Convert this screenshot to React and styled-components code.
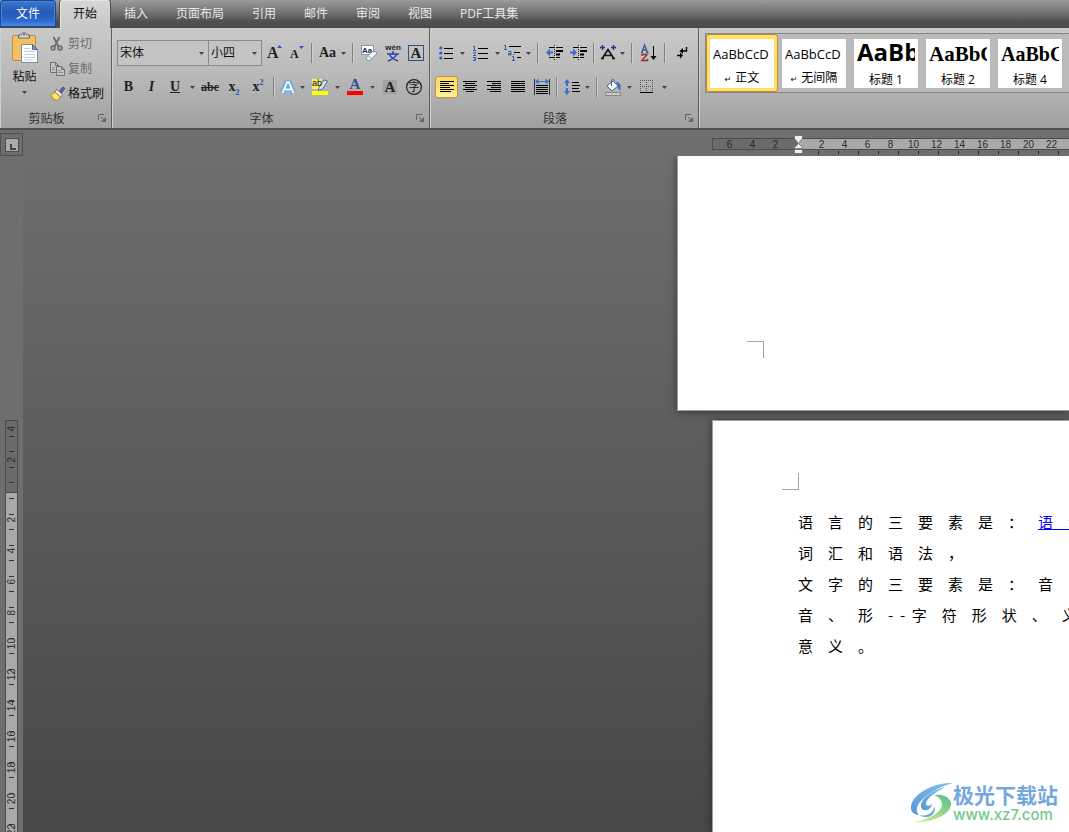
import React from 'react';
import styled, { createGlobalStyle, css } from 'styled-components';

const GlobalStyle = createGlobalStyle`
  * {
    box-sizing: border-box;
  }

  body {
    margin: 0;
    font-family: 'Open Sans', 'Noto Sans CJK SC', sans-serif;
    font-size: 12px;
    color: #111;
  }

  button, select {
    margin: 0;
    padding: 0;
    border: 0;
    background: none;
    font: inherit;
    color: inherit;
  }

  svg {
    flex-shrink: 0;
    overflow: visible;
  }
`;

const Window = styled.div`
  display: flex;
  flex-direction: column;
  height: 100vh;
  overflow: hidden;
  position: relative;
`;

const TabBar = styled.nav`
  display: flex;
  align-items: stretch;
  height: 28px;
  flex-shrink: 0;
  background: linear-gradient(#9c9c9c, #787878 40%, #505050 80%, #4c4c4c);
  border-bottom: 1px solid #484848;
`;

const Tab = styled.button`
  padding: 0 14px;
  line-height: 26px;
  color: #e8e8e8;
  white-space: nowrap;

  ${({ $file }) => $file && css`
    width: 56px;
    margin-right: 4px;
    border: 1px solid #1c479c;
    border-radius: 3px 3px 0 0;
    color: #fff;
    background: linear-gradient(#3a78d0, #2459b4 45%, #2c6bd0 80%, #4a90ea);
    box-shadow: inset 0 0 0 1px #4a82d6;
  `}

  ${({ $active }) => $active && css`
    padding: 0 13px;
    margin-bottom: -1px;
    border-radius: 3px 3px 0 0;
    color: #111;
    background: linear-gradient(#d6d6d6, #c8c8c8);
    box-shadow: inset 1px 1px 0 #e6e6e6, 0 0 0 1px #505050;
    clip-path: inset(-1px -1px 0);
  `}
`;

const Ribbon = styled.div`
  display: flex;
  height: 102px;
  flex-shrink: 0;
  background: linear-gradient(#c9c9c9, #b8b8b8 50%, #a0a0a0);
  border-bottom: 2px solid #505050;
`;

const Group = styled.section`
  display: flex;
  flex-direction: column;
  flex-shrink: 0;
  width: ${({ $width }) => $width};
  flex-grow: ${({ $grow }) => ($grow ? 1 : 0)};
  min-width: 0;
  border-right: ${({ $grow }) => ($grow ? '0' : '1px solid #5e5e5e')};
  box-shadow: inset 1px 0 0 #cfcfcf;
`;

const GroupBody = styled.div`
  display: flex;
  flex-direction: ${({ $stacked }) => ($stacked ? 'column' : 'row')};
  height: 80px;
  padding: ${({ $pad }) => $pad};
`;

const GroupFooter = styled.footer`
  display: flex;
  align-items: center;
  height: 20px;
  color: #333;

  h2 {
    flex: 1;
    margin: 0;
    font-size: 12px;
    font-weight: normal;
    text-align: center;
  }

  button {
    width: 18px;
    height: 12px;
    line-height: 0;
  }
`;

const PasteButton = styled.button`
  display: flex;
  flex-direction: column;
  align-items: center;
  gap: 6px;
  width: 49px;
  padding-top: 2px;
  line-height: 16px;
`;

const ClipList = styled.div`
  display: flex;
  flex-direction: column;
  padding-left: 1px;
`;

const ClipButton = styled.button`
  display: grid;
  grid-template-columns: 15px auto;
  align-items: center;
  justify-items: start;
  gap: 3px;
  height: 25px;
  line-height: 16px;
  color: #111;

  &:disabled {
    color: #6c6c6c;
  }
`;

const ToolRow = styled.div`
  display: flex;
  align-items: center;
  height: 26px;
  margin-bottom: 8px;
`;

const Picker = styled.label`
  display: flex;
  align-items: center;
  width: ${({ $width }) => $width};
  height: 26px;
  margin-right: -1px;
  border: 1px solid #8a8a8a;
  background: #c4c4c4;

  &:last-of-type {
    margin-right: 0;
  }

  select {
    flex: 1;
    min-width: 0;
    appearance: none;
    padding: 0 0 2px 2px;
    outline: 0;
  }

  svg {
    margin-right: 4px;
  }
`;

const ToolButton = styled.button`
  display: flex;
  align-items: center;
  justify-content: center;
  width: ${({ $width }) => $width || '24px'};
  height: 22px;
  flex-shrink: 0;

  ${({ $active }) => $active && css`
    border: 1px solid #c29535;
    border-radius: 3px;
    background: linear-gradient(#fbd66d, #fce47c 60%, #fff2a0);
  `}
`;

const ArrowSlot = styled.button`
  display: flex;
  align-items: center;
  justify-content: center;
  width: 11px;
  height: 22px;
  flex-shrink: 0;
`;

const Separator = styled.span`
  width: 2px;
  height: 20px;
  margin: 0 4px 0 3px;
  flex-shrink: 0;
  background: linear-gradient(90deg, #808080 50%, #d0d0d0 50%);
`;

const Letter = styled.span`
  font-family: 'Liberation Serif', serif;
  font-size: ${({ $size }) => $size || '14px'};
  font-weight: bold;
  font-style: ${({ $italic }) => ($italic ? 'italic' : 'normal')};
  text-decoration: ${({ $line }) => $line || 'none'};
  line-height: 16px;
  color: #222;

  sup, sub {
    font-size: 8px;
    line-height: 0;
    color: #2455b0;
  }
`;

const Gallery = styled.div`
  display: flex;
  width: 100%;
  height: 60px;
  overflow: hidden;
  border: 1px solid #868686;
  border-right: 0;
  background: #bababa;
`;

const StyleItem = styled.button`
  width: 72px;
  height: 58px;
  flex-shrink: 0;
  padding: 4px;
  border-radius: 3px;

  ${({ $active }) => $active && css`
    padding: 3px;
    border: 1px solid #c08a28;
    background: #ffdf70;
  `}
`;

const StyleCard = styled.span`
  display: flex;
  flex-direction: column;
  justify-content: space-between;
  height: 49px;
  padding: 0 3px;
  background: #fff;
  color: #000;
  text-align: left;
`;

const Sample = styled.span`
  height: 31px;
  line-height: ${({ $line }) => $line || '30px'};
  overflow: hidden;
  white-space: nowrap;
  font-family: ${({ $font }) => $font};
  font-size: ${({ $size }) => $size};
  font-weight: ${({ $bold }) => ($bold ? 'bold' : 'normal')};
`;

const StyleName = styled.span`
  line-height: 17px;
  text-align: center;
  white-space: nowrap;

  small {
    margin-right: 4px;
    font-family: 'DejaVu Sans', sans-serif;
    font-size: 8px;
  }
`;

const Workspace = styled.main`
  display: flex;
  flex: 1;
  min-height: 0;
  background: linear-gradient(#6f6f6f, #474747);
`;

const SideRuler = styled.aside`
  display: flex;
  flex-direction: column;
  width: 23px;
  flex-shrink: 0;
  padding-top: 3px;
  background: #6e6e6e;
  overflow: hidden;
`;

const TabStop = styled.button`
  display: flex;
  align-items: center;
  justify-content: center;
  width: 23px;
  height: 23px;
  flex-shrink: 0;
  margin-bottom: 264px;
  border: 1px solid #505050;

  span {
    display: flex;
    width: 14px;
    height: 14px;
    border: 1px solid #4c4c4c;
    background: #aaa;
  }
`;

const VRuler = styled.div`
  display: flex;
  flex-direction: column;
  width: 13px;
  margin-left: 5px;
  border: 1px solid #4c4c4c;
  border-bottom: 0;
  font: 10px/11px 'Liberation Sans', sans-serif;
  color: #2a2a2a;
  background: #a9a9a9;
`;

const VMargin = styled.div`
  height: 72px;
  flex-shrink: 0;
  background: #6b6b6b;
  border-bottom: 1px solid #4c4c4c;
`;

const VCell = styled.div`
  display: grid;
  grid-template-rows: ${({ $margin }) => ($margin ? '15px 1px 14px 1px' : '5px 1px 15px 1px 9px')};
  justify-items: center;
  height: 31px;
  flex-shrink: 0;

  i {
    width: 5px;
    height: 1px;
    background: #333;
  }

  span {
    align-self: center;
    writing-mode: vertical-rl;
    transform: rotate(180deg);
  }
`;

const Canvas = styled.div`
  display: flex;
  flex-direction: column;
  flex: 1;
  min-width: 0;
  overflow: hidden;
`;

const HRuler = styled.div`
  display: flex;
  height: 26px;
  flex-shrink: 0;
  padding-top: 8px;
  margin-left: 689px;
  font: 10px/11px 'Liberation Sans', sans-serif;
  color: #2a2a2a;
  text-align: center;

  span {
    width: 23px;
    flex-shrink: 0;
  }
`;

const HMargin = styled.div`
  display: flex;
  justify-content: flex-end;
  width: 86px;
  height: 12px;
  flex-shrink: 0;
  padding-right: 11px;
  border: 1px solid #4c4c4c;
  border-right: 0;
  background: #6b6b6b;
`;

const HScale = styled.div`
  display: flex;
  flex: 1;
  min-width: 0;
  height: 12px;
  padding-left: 12px;
  position: relative;
  border: 1px solid #4c4c4c;
  border-width: 1px 0;
  background: #a9a9a9;
`;

const Indent = styled.svg`
  position: absolute;
  left: -4px;
  top: -4px;
`;

const Ticks = styled.div`
  position: absolute;
  left: 20px;
  right: 0;
  top: 12px;
  height: 3px;
  background: repeating-linear-gradient(90deg, #222 0 1px, transparent 1px 20px);
`;

const Pages = styled.div`
  display: flex;
  flex-direction: column;
  flex: 1;
  gap: 9px;
  min-height: 0;
  overflow: hidden;
`;

const Page = styled.article`
  margin-left: ${({ $left }) => $left};
  padding: ${({ $pad }) => $pad};
  flex: ${({ $grow }) => ($grow ? '1' : 'none')};
  min-height: 0;
  overflow: hidden;
  border: 1px solid #9a9ea3;
  border-width: ${({ $grow }) => ($grow ? '1px 0 0 1px' : '0 0 1px 1px')};
  background: #fff;
  box-shadow: 0 1px 8px rgba(0, 0, 0, 0.45);
`;

const CropMark = styled.div`
  width: 17px;
  height: 17px;
  border-right: 1px solid #a6a6a6;
  border-top: ${({ $top }) => ($top ? '1px solid #a6a6a6' : '0')};
  border-bottom: ${({ $top }) => ($top ? '0' : '1px solid #a6a6a6')};
`;

const Body = styled.div`
  padding: 16px 0 0 16px;
  font-family: 'Noto Sans CJK SC', sans-serif;
  font-size: 15px;
  line-height: 31px;
  text-spacing-trim: space-all;
  color: #000;

  p {
    margin: 0;
    white-space: pre;
  }

  a {
    color: #00f;
    text-decoration: underline;
  }
`;

const Watermark = styled.div`
  position: absolute;
  right: 11px;
  bottom: 8px;
  display: flex;
  align-items: center;

  strong, span {
    display: block;
    white-space: nowrap;
  }

  strong {
    font: bold 21px/24px 'Noto Sans CJK SC', sans-serif;
    color: #74a7dc;
  }

  span {
    font: 500 15px/18px Inter, sans-serif;
    color: #74ca8c;
  }
`;

const Arrow = () => (
  <svg width="5" height="3" viewBox="0 0 5 3">
    <path d="M0 0h5L2.500 3z" fill="#444" />
  </svg>
);

const Launcher = () => (
  <svg width="8" height="8" viewBox="0 0 8 8" fill="none" stroke="#666">
    <path d="M.5 6V.5H6M3 3l3 3M7.500 3.500v4h-4" />
    <path d="M4 7.500h3.500V4z" fill="#666" />
  </svg>
);

const Lines = ({ rows }) => (
  <svg width="16" height="14" viewBox="0 0 16 14" stroke="#000">
    {rows.map(([x, w], i) => (
      <path key={i} d={`M${x} ${i * 2 + 1.5}h${w}`} />
    ))}
  </svg>
);

const LEFT = [[1, 14], [1, 9], [1, 14], [1, 10], [1, 14], [1, 11]];
const CENTER = [[1, 14], [3, 10], [1, 14], [3, 10], [1, 14], [4, 8]];
const RIGHT = [[1, 14], [6, 9], [1, 14], [5, 10], [1, 14], [4, 11]];
const JUSTIFY = [[1, 14], [1, 14], [1, 14], [1, 14], [1, 14], [1, 14]];

const PasteIcon = () => (
  <svg width="28" height="30" viewBox="0 0 28 30">
    <rect x="1.500" y="2.500" width="23" height="25" rx="1.500" fill="#f2c063" stroke="#c58e35" />
    <path d="M7.500 5V2h3c0-3 5-3 5 0h3v3z" fill="#d8dadd" stroke="#666" />
    <circle cx="13" cy="1.500" r="1" fill="#555" />
    <path d="M10.500 11.500h11l5 5v13h-16z" fill="#fdfdff" stroke="#7b8ca6" />
    <path d="M21.500 11.500v5h5z" fill="#7f9ac4" stroke="#4a649a" />
    <path d="M13 15.500h6M13 18.500h11M13 21.500h11M13 24.500h11M13 27h9" stroke="#c0cde2" />
  </svg>
);

const CutIcon = () => (
  <svg width="13" height="14" viewBox="0 0 13 14" fill="none" stroke="#6e6e6e" strokeWidth="1.800">
    <path d="M3.500 0l5 9.500M9.500 0L4.500 9.500" />
    <circle cx="3" cy="11" r="1.900" />
    <circle cx="10" cy="11" r="1.900" />
  </svg>
);

const CopyIcon = () => (
  <svg width="15" height="14" viewBox="0 0 15 14" fill="#c4c4c4" stroke="#707070">
    <path d="M.5.5h5l3 3v7h-8zM5.500.5v3h3" />
    <path d="M6.500 4.500h5l3 3v6h-8zM11.500 4.500v3h3" />
    <path d="M2 5.500h3M2 7.500h3M8 8.500h3M8 10.500h5" stroke="#909090" />
  </svg>
);

const BrushIcon = () => (
  <svg width="15" height="14" viewBox="0 0 15 14">
    <path d="M9.500 4l3-3.500c1-.8 2.500.5 1.800 1.500L11.500 6z" fill="#6a62b8" stroke="#39357c" strokeWidth=".8" />
    <path d="M7 2.500L12.500 8l-2 2L5 5z" fill="#f4f4f4" stroke="#66686f" strokeWidth=".9" />
    <path d="M5 5l5.500 5L7.500 13.500 4 12.500.5 8z" fill="#f8d84e" stroke="#a88218" strokeWidth=".8" />
    <path d="M3 8l4 4M5 7l3.500 3.500" stroke="#fff6b8" />
  </svg>
);

const SizeIcon = ({ grow }) => (
  <svg width="16" height="18" viewBox="0 0 16 18">
    <text x="1" y="14" fontFamily="Liberation Serif" fontWeight="bold" fontSize={grow ? 16 : 12} fill="#222">A</text>
    <path d={grow ? 'M11 4h5L13.500 1z' : 'M10 2h5L12.500 5z'} fill="#2c5aa8" />
  </svg>
);

const EraserIcon = () => (
  <svg width="17" height="17" viewBox="0 0 17 17">
    <rect x=".5" y=".5" width="12" height="9" fill="#fff" stroke="#8396b8" />
    <text x="1" y="8" fontFamily="Liberation Sans" fontWeight="bold" fontSize="8" fill="#1c2c4c">Aa</text>
    <path d="M5.500 12l6-5.500c2-1 4.500.5 4 2.500l-6 6c-2 1.500-5-.5-4-3z" fill="#f2f5fa" stroke="#6f82a6" />
    <path d="M7 10.500l4 3.500" stroke="#90a2c4" />
  </svg>
);

const PinyinIcon = () => (
  <svg width="18" height="18" viewBox="0 0 18 18">
    <text x="9" y="6" textAnchor="middle" fontFamily="Liberation Sans" fontWeight="bold" fontSize="8" fill="#222">wén</text>
    <path d="M9 7v3M3 10h12M5.500 10.500c1.500 3 4 5 8.500 6.500M12.500 10.500c-1.500 3-4 5-8.500 6.500" fill="none" stroke="#2440b0" strokeWidth="1.500" />
  </svg>
);

const BoxedA = () => (
  <svg width="16" height="16" viewBox="0 0 16 16">
    <rect x=".5" y=".5" width="15" height="15" fill="none" stroke="#31547c" />
    <text x="8" y="13" textAnchor="middle" fontFamily="Liberation Serif" fontWeight="bold" fontSize="15" fill="#222">A</text>
  </svg>
);

const GlowA = () => (
  <svg width="16" height="18" viewBox="1 0 16 18" fill="none" strokeLinejoin="round">
    <path d="M3.500 15L8 4h2l4.500 11M6 11.500h6" stroke="#6ab8e6" strokeWidth="6" opacity=".55" />
    <path d="M3.500 15L8.200 4h1.600L14.500 15M6 11.500h6" stroke="#4b9bd4" strokeWidth="3.600" />
    <path d="M3.500 15L8.200 4h1.600L14.500 15M6 11.500h6" stroke="#f4faff" strokeWidth="2" />
  </svg>
);

const HighlightIcon = () => (
  <svg width="18" height="18" viewBox="0 0 18 18">
    <rect x="1" y="1" width="10" height="10" fill="#f6f06a" />
    <path d="M8 9l5-7 3.500 1-5 8-4 1.500z" fill="#dfe7f2" stroke="#4a6ca6" />
    <text x="1" y="8" fontFamily="Liberation Sans" fontSize="9" fill="#111">ab</text>
    <rect x="1" y="13" width="16" height="4" fill="#ff0" />
  </svg>
);

const FontColorIcon = () => (
  <svg width="16" height="18" viewBox="0 0 16 18">
    <text x="8" y="11" textAnchor="middle" fontFamily="Liberation Serif" fontWeight="bold" fontSize="15" fill="#2a4f90">A</text>
    <rect y="13" width="16" height="4" fill="#f00" />
  </svg>
);

const ShadedA = () => (
  <svg width="16" height="16" viewBox="0 0 16 16">
    <rect x="1" y="1" width="14" height="14" fill="#a2a2a2" />
    <text x="8" y="13" textAnchor="middle" fontFamily="Liberation Serif" fontWeight="bold" fontSize="15" fill="#222">A</text>
  </svg>
);

const CircledIcon = () => (
  <svg width="16" height="16" viewBox="0 0 16 16">
    <circle cx="8" cy="8" r="7.400" fill="none" stroke="#222" strokeWidth="1.200" />
    <text x="8" y="12" textAnchor="middle" fontFamily="Noto Sans CJK SC" fontSize="11" fill="#111">字</text>
  </svg>
);

const BulletsIcon = () => (
  <svg width="14" height="14" viewBox="0 0 14 14">
    <g fill="#2f5bb0">
      <circle cx="1.800" cy="2" r="1.600" />
      <circle cx="1.800" cy="7" r="1.600" />
      <circle cx="1.800" cy="12" r="1.600" />
    </g>
    <path d="M5 2.500h9M5 7.500h9M5 12.500h9" stroke="#000" />
  </svg>
);

const NumbersIcon = () => (
  <svg width="15" height="15" viewBox="0 0 15 15">
    <g fill="none" stroke="#2f5bb0">
      <path d="M0 .5h1.500V4M0 4.500h3M0 6.500h2.500v1L.5 9.500H3M0 11.500h2.500v3H0M1 13h1.500" />
    </g>
    <path d="M5 2.500h10M5 7.500h10M5 12.500h10" stroke="#000" />
  </svg>
);

const MultiIcon = () => (
  <svg width="18" height="16" viewBox="0 0 18 16">
    <g fill="none" stroke="#2f5bb0">
      <path d="M0 .5h1.500V4M0 4.500h3M4 6.500h3V10H4.500V8.500H7M8 11.500h1.500V15M8 15.500h3M9 9.500h1" />
    </g>
    <path d="M5 1.500h12M10 7.500h6M13 12.500h4" stroke="#000" />
  </svg>
);

const IndentIcon = ({ out }) => (
  <svg width="16" height="16" viewBox="0 0 16 16">
    <path d="M2 2.500h5M9 2.500h7M2 12.500h5M9 12.500h4" stroke="#000" />
    <path d="M9 6h7M9 9.500h4" stroke="#000" strokeWidth="2" />
    <path d="M7.500 0v16" stroke="#222" strokeDasharray="1 1" />
    <path d={out ? 'M-1 7.500L3 3.500v3h3v2H3v3z' : 'M6 7.500l-4-4v3h-3v2h3v3z'} fill="#3a6fd0" />
  </svg>
);

const AsianLayoutIcon = () => (
  <svg width="16" height="16" viewBox="0 0 16 16">
    <path d="M1 13.500h3M12 13.500h3M2.500 13L8 4.500l5.500 8.500M5 10.500h6" fill="none" stroke="#111" strokeWidth="1.600" />
    <path d="M0 2.500h5M11 2.500h5M2.500 0v5M13.500 0v5" stroke="#1c2f9c" strokeWidth="1.400" />
  </svg>
);

const SortIcon = () => (
  <svg width="16" height="18" viewBox="0 0 16 18">
    <path d="M0 8.500h2M5 8.500h2.500M1 8.500L3.500 1l3 7.500M2 6h3.500" fill="none" stroke="#2f5b9c" strokeWidth="1.300" />
    <path d="M1 12v-1.500h5L1 16.500h5.500V15" fill="none" stroke="#9c2f2f" strokeWidth="1.400" />
    <path d="M12.500 2v13" stroke="#000" />
    <path d="M9.500 12h6l-3 4z" fill="#000" />
  </svg>
);

const MarksIcon = () => (
  <svg width="14" height="14" viewBox="0 0 14 14">
    <path d="M11.500 1v4H6M2 9.500h5" fill="none" stroke="#000" strokeWidth="1.400" />
    <path d="M8 2L4.500 5 8 8zM5 6.500l3 3-3 3z" fill="#000" />
  </svg>
);

const DistributeIcon = () => (
  <svg width="16" height="16" viewBox="0 0 16 16">
    <path d="M.5 0v16M15.500 0v16" stroke="#333" />
    <path d="M2 6.500h12M2 8.500h12M2 10.500h12M2 12.500h12M2 14.500h12" stroke="#000" />
    <path d="M1 2.500L4.500-.5V2h7V-.5L15 2.500l-3.500 3V3h-7v2.500z" fill="#3a6fd0" />
  </svg>
);

const SpacingIcon = () => (
  <svg width="16" height="16" viewBox="0 0 16 16">
    <path d="M3 0l3 4H4v3H2V4H0zM3 16l3-4H4V9H2v3H0z" fill="#3a6fd0" />
    <path d="M8 3.500h7M8 6.500h8M8 9.500h7M8 12.500h8" stroke="#000" />
  </svg>
);

const BucketIcon = () => (
  <svg width="16" height="17" viewBox="0 0 16 17">
    <path d="M2 7l6-5 5 5-6 5z" fill="#f4f7fb" stroke="#4a6288" />
    <path d="M6.500 7V2c0-2 3-2 3 0" fill="none" stroke="#4a6288" />
    <path d="M11 3c3.500 0 5.500 2 4.500 8-1.500 0-2.500-1-2.500-4z" fill="#3f71c2" />
    <rect x=".5" y="13.500" width="15" height="3" fill="#c8c8c8" stroke="#8a8a8a" />
  </svg>
);

const BordersIcon = () => (
  <svg width="14" height="14" viewBox="0 0 14 14" fill="none">
    <path d="M0 .5h13M0 6.500h13M.5 0v12M6.500 0v12M12.500 0v12" stroke="#555" strokeDasharray="1 1" />
    <path d="M0 12.500h13" stroke="#000" />
  </svg>
);

const SiteLogo = () => (
  <svg width="43" height="42" viewBox="0 0 43 42">
    <defs>
      <linearGradient id="swoosh-blue" x1="0" y1="1" x2="1" y2="0">
        <stop offset="0" stopColor="#5a96d8" />
        <stop offset="1" stopColor="#7fc4ea" />
      </linearGradient>
      <linearGradient id="swoosh-green" x1="0" y1="1" x2="1" y2="0">
        <stop offset="0" stopColor="#e8f27a" />
        <stop offset="1" stopColor="#4fbf8d" />
      </linearGradient>
    </defs>
    <path d="M43 1C26 0 3 11 1 24c-1 5 3 9 8 9-5-5-1-12 5-17C22 9 32 4 43 1z" fill="url(#swoosh-blue)" />
    <path d="M35 5C23 8 11 16 11 24c0 7 10 5 11-2-3 3-7 2-6-1 2-6 10-11 19-16z" fill="url(#swoosh-blue)" />
    <path d="M24 13c8-1 14 1 17 7 2 11-17 21-37 20 14-2 27-9 28-17 0-5-3-8-8-10z" fill="url(#swoosh-green)" />
    <path d="M9 33c8 2 14-2 16-9 1 10-8 14-16 9z" fill="#6ea6dd" />
  </svg>
);

const Tool = ({ label, width, active, children }) => (
  <ToolButton type="button" aria-label={label} $width={width} $active={active}>
    {children}
  </ToolButton>
);

const SplitTool = ({ label, width, children }) => (
  <>
    <Tool label={label} width={width}>{children}</Tool>
    <ArrowSlot type="button" aria-label={`${label}选项`}>
      <Arrow />
    </ArrowSlot>
  </>
);

const Footer = ({ title }) => (
  <GroupFooter>
    <h2>{title}</h2>
    <button type="button" aria-label={`${title}设置`}>
      <Launcher />
    </button>
  </GroupFooter>
);

const ClipboardGroup = () => (
  <Group $width="112px">
    <GroupBody $pad="3px 0 0">
      <PasteButton type="button">
        <PasteIcon />
        粘贴
        <Arrow />
      </PasteButton>
      <ClipList>
        <ClipButton type="button" disabled><CutIcon />剪切</ClipButton>
        <ClipButton type="button" disabled><CopyIcon />复制</ClipButton>
        <ClipButton type="button"><BrushIcon />格式刷</ClipButton>
      </ClipList>
    </GroupBody>
    <Footer title="剪贴板" />
  </Group>
);

const FontGroup = () => (
  <Group $width="318px">
    <GroupBody $stacked $pad="12px 0 0 5px">
      <ToolRow>
        <Picker $width="92px">
          <select aria-label="字体" defaultValue="宋体">
            <option>宋体</option>
          </select>
          <Arrow />
        </Picker>
        <Picker $width="54px">
          <select aria-label="字号" defaultValue="小四">
            <option>小四</option>
          </select>
          <Arrow />
        </Picker>
        <Tool label="增大字体" width="23px"><SizeIcon grow /></Tool>
        <Tool label="缩小字体" width="23px"><SizeIcon /></Tool>
        <Separator />
        <SplitTool label="更改大小写" width="21px"><Letter>Aa</Letter></SplitTool>
        <Separator />
        <Tool label="清除格式" width="23px"><EraserIcon /></Tool>
        <Tool label="拼音指南" width="23px"><PinyinIcon /></Tool>
        <Tool label="字符边框" width="23px"><BoxedA /></Tool>
      </ToolRow>
      <ToolRow>
        <Tool label="加粗" width="23px"><Letter>B</Letter></Tool>
        <Tool label="倾斜" width="23px"><Letter $italic>I</Letter></Tool>
        <SplitTool label="下划线"><Letter $line="underline">U</Letter></SplitTool>
        <Tool label="删除线"><Letter $size="12px" $line="line-through">abc</Letter></Tool>
        <Tool label="下标"><Letter>x<sub>2</sub></Letter></Tool>
        <Tool label="上标"><Letter>x<sup>2</sup></Letter></Tool>
        <Separator />
        <SplitTool label="文本效果" width="18px"><GlowA /></SplitTool>
        <SplitTool label="突出显示"><HighlightIcon /></SplitTool>
        <SplitTool label="字体颜色"><FontColorIcon /></SplitTool>
        <Tool label="字符底纹"><ShadedA /></Tool>
        <Tool label="带圈字符" width="23px"><CircledIcon /></Tool>
      </ToolRow>
    </GroupBody>
    <Footer title="字体" />
  </Group>
);

const ParagraphGroup = () => (
  <Group $width="269px">
    <GroupBody $stacked $pad="12px 0 0 5px">
      <ToolRow>
        <SplitTool label="项目符号" width="22px"><BulletsIcon /></SplitTool>
        <SplitTool label="编号"><NumbersIcon /></SplitTool>
        <SplitTool label="多级列表" width="20px"><MultiIcon /></SplitTool>
        <Separator />
        <Tool label="减少缩进量"><IndentIcon out /></Tool>
        <Tool label="增加缩进量" width="23px"><IndentIcon /></Tool>
        <Separator />
        <SplitTool label="中文版式" width="18px"><AsianLayoutIcon /></SplitTool>
        <Separator />
        <Tool label="排序"><SortIcon /></Tool>
        <Separator />
        <Tool label="显示编辑标记"><MarksIcon /></Tool>
      </ToolRow>
      <ToolRow>
        <Tool label="左对齐" width="23px" active><Lines rows={LEFT} /></Tool>
        <Tool label="居中"><Lines rows={CENTER} /></Tool>
        <Tool label="右对齐"><Lines rows={RIGHT} /></Tool>
        <Tool label="两端对齐"><Lines rows={JUSTIFY} /></Tool>
        <Tool label="分散对齐" width="23px"><DistributeIcon /></Tool>
        <Separator />
        <SplitTool label="行距" width="20px"><SpacingIcon /></SplitTool>
        <Separator />
        <SplitTool label="底纹" width="22px"><BucketIcon /></SplitTool>
        <SplitTool label="边框"><BordersIcon /></SplitTool>
      </ToolRow>
    </GroupBody>
    <Footer title="段落" />
  </Group>
);

const STYLES = [
  { name: '正文', sample: 'AaBbCcD', font: 'Open Sans', size: '13px', mark: true, active: true },
  { name: '无间隔', sample: 'AaBbCcD', font: 'Open Sans', size: '13px', mark: true },
  { name: '标题 1', sample: 'AaBb', font: 'Open Sans', size: '24px', line: '26px', bold: true },
  { name: '标题 2', sample: 'AaBbC', font: 'Liberation Serif', size: '21px', bold: true },
  { name: '标题 4', sample: 'AaBbCc', font: 'Liberation Serif', size: '20px', bold: true },
];

const StylesGroup = () => (
  <Group $width="0" $grow>
    <GroupBody $pad="5px 0 0 6px">
      <Gallery>
        {STYLES.map(style => (
          <StyleItem key={style.name} type="button" $active={style.active}>
            <StyleCard>
              <Sample $font={style.font} $size={style.size} $line={style.line} $bold={style.bold}>
                {style.sample}
              </Sample>
              <StyleName>
                {style.mark && <small>↵</small>}
                {style.name}
              </StyleName>
            </StyleCard>
          </StyleItem>
        ))}
      </Gallery>
    </GroupBody>
  </Group>
);

const V_NUMBERS = [2, 4, 6, 8, 10, 12, 14, 16, 18, 20, 22, 24];
const H_NUMBERS = [2, 4, 6, 8, 10, 12, 14, 16, 18, 20, 22, 24, 26, 28];

const LeftRuler = () => (
  <SideRuler>
    <TabStop type="button" aria-label="制表符">
      <span>
        <svg width="12" height="12" viewBox="0 0 12 12">
          <path d="M5 5v5h5" fill="none" stroke="#444" strokeWidth="2" />
        </svg>
      </span>
    </TabStop>
    <VRuler>
      <VMargin>
        {[4, 2].map(n => (
          <VCell key={n} $margin><span>{n}</span><i /><b /><i /></VCell>
        ))}
      </VMargin>
      {V_NUMBERS.map(n => (
        <VCell key={n}><b /><i /><b /><i /><span>{n}</span></VCell>
      ))}
    </VRuler>
  </SideRuler>
);

const TopRuler = () => (
  <HRuler>
    <HMargin>
      <span>6</span>
      <span>4</span>
      <span>2</span>
    </HMargin>
    <HScale>
      {H_NUMBERS.map(n => <span key={n}>{n}</span>)}
      <Ticks />
      <Indent width="9" height="19" viewBox="0 0 9 19" fill="#f0f0f0" stroke="#777">
        <path d="M.5.5h8v3l-4 5-4-5zM4.500 8.500l4 4v1h-8v-1zM.5 14.500h8v4h-8z" />
      </Indent>
    </HScale>
  </HRuler>
);

const TABS = ['插入', '页面布局', '引用', '邮件', '审阅', '视图', 'PDF工具集'];

const App = () => (
  <>
    <GlobalStyle />
    <Window>
      <TabBar>
        <Tab type="button" $file>文件</Tab>
        <Tab type="button" $active>开始</Tab>
        {TABS.map(tab => <Tab key={tab} type="button">{tab}</Tab>)}
      </TabBar>
      <Ribbon>
        <ClipboardGroup />
        <FontGroup />
        <ParagraphGroup />
        <StylesGroup />
      </Ribbon>
      <Workspace>
        <LeftRuler />
        <Canvas>
          <TopRuler />
          <Pages>
            <Page $left="654px" $pad="185px 0 52px 69px">
              <CropMark $top />
            </Page>
            <Page $left="689px" $pad="52px 0 0 69px" $grow>
              <CropMark />
              <Body>
                <p>语　言　的　三　要　素　是　：　<a href="#yuyin">语　音　</a></p>
                <p>词　汇　和　语　法　，</p>
                <p>文　字　的　三　要　素　是　：　音</p>
                <p>音　、　形　-  -  字　符　形　状　、　义</p>
                <p>意　义　。</p>
              </Body>
            </Page>
          </Pages>
        </Canvas>
      </Workspace>
      <Watermark>
        <SiteLogo />
        <div>
          <strong>极光下载站</strong>
          <span>www.xz7.com</span>
        </div>
      </Watermark>
    </Window>
  </>
);

export default App;
